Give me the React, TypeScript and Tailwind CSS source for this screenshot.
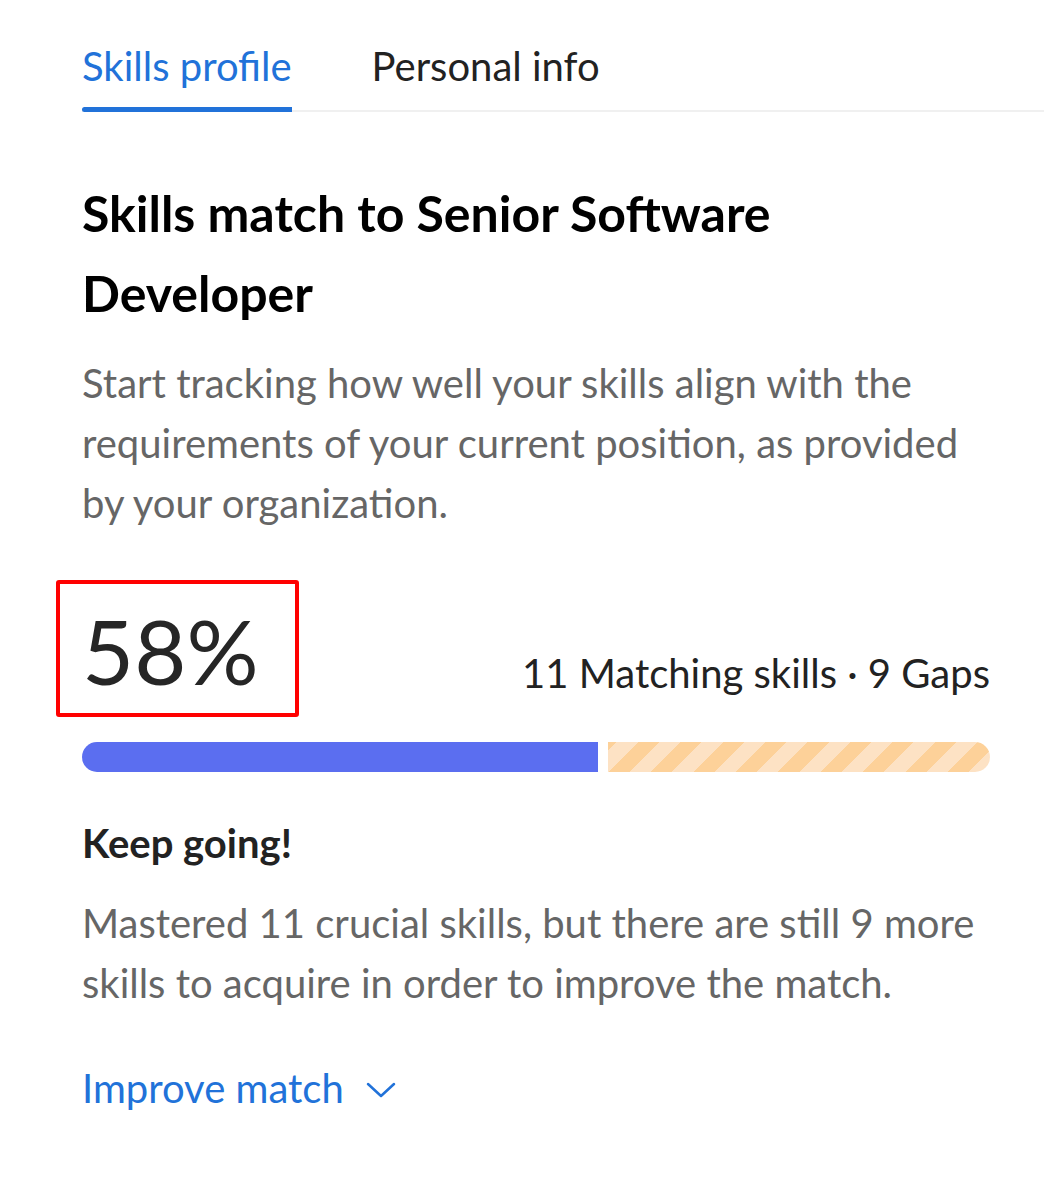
import React from 'react';

const App: React.FC = () => {
  const matched = 11;
  const gaps = 9;
  const summary = `${matched} Matching skills · ${gaps} Gaps`;
  const detail = `Mastered ${matched} crucial skills, but there are still ${gaps} more skills to acquire in order to improve the match.`;

  return (
    <div className="min-h-screen bg-white" style={{ fontFamily: 'Lato, "Noto Sans", sans-serif' }}>
      <div className="pl-[82px]">
        {/* tabs */}
        <div className="flex items-end gap-[80px] border-b-2 border-[#f0f0f0] pt-[42px]">
          <button className="relative pb-[20px] text-[40px] leading-[48px] text-[#2172d9]">
            Skills profile
            <span className="absolute bottom-[-2px] left-0 right-0 h-[5px] rounded-l-sm bg-[#2172d9]" />
          </button>
          <button className="pb-[20px] text-[40px] leading-[48px] text-[#222]">Personal info</button>
        </div>
      </div>

      <div className="pl-[82px] pr-[54px] pt-[61px]">
        <h1 className="text-[50px] font-bold leading-[80px] text-black">
          Skills match to Senior Software Developer
        </h1>
        <p className="mt-[20px] text-[40px] leading-[60px] text-[#666]">
          Start tracking how well your skills align with the requirements of your current position, as provided by your organization.
        </p>

        <div className="mt-[62px] flex items-end justify-between">
          <div className="relative">
            <span className="block text-[90px] leading-[110px] text-[#262626]">58%</span>
            <span className="pointer-events-none absolute left-[-26px] top-[-15px] h-[137px] w-[243px] rounded-[3px] border-[4px] border-[#ff0000]" />
          </div>
          <span className="mb-[8px] text-[40px] leading-[48px] text-[#222]">{summary}</span>
        </div>

        <div className="mt-[37px] flex h-[30px] gap-[10px]">
          <div className="h-full w-[516px] rounded-l-full bg-[#5b6ef0]" />
          <div
            className="h-full flex-1 rounded-r-full"
            style={{
              backgroundImage:
                'repeating-linear-gradient(-45deg, #fde2c4 0px, #fde2c4 15px, #fdd199 15px, #fdd199 30px)',
            }}
          />
        </div>

        <h2 className="mt-[41px] text-[40px] font-bold leading-[60px] text-[#222]">Keep going!</h2>
        <p className="mt-[20px] text-[40px] leading-[60px] text-[#666]">{detail}</p>

        <button className="mt-[45px] flex items-center gap-[22px] text-[40px] leading-[60px] text-[#2172d9]">
          Improve match
          <svg width="30" height="16" viewBox="0 0 30 16" fill="none" className="mt-[4px]">
            <polyline points="2,2 15,14 28,2" stroke="currentColor" strokeWidth="2.5" strokeLinecap="round" strokeLinejoin="round" />
          </svg>
        </button>
      </div>
    </div>
  );
};

export default App;
